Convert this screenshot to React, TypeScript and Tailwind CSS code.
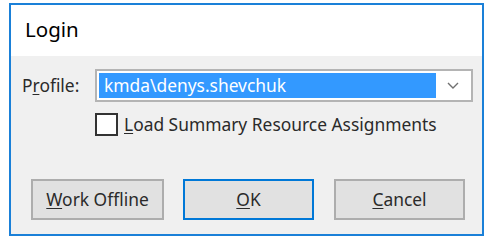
import React from "react";

export default function App() {
  const font = { fontFamily: '"Noto Sans", "Open Sans", sans-serif' };
  return (
    <div className="w-[492px] h-[241px] bg-white pt-[3px] pl-[9px]" style={font}>
      <div className="w-[475px] h-[233px] border-2 border-[#1a80d8] flex flex-col">
        <div className="h-[51px] bg-white flex items-center pl-[14px] text-[20.5px] text-black leading-none pb-[2px]">
          Login
        </div>
        <div className="flex-1 bg-[#f0f0f0] flex flex-col pt-[13px] text-[17.4px] text-[#2a2a2a]">
          <div className="flex items-center h-[33px]">
            <div className="w-[84px] pl-[11px] leading-none">
              P<span className="underline underline-offset-2">r</span>ofile:
            </div>
            <div className="w-[378px] h-[33px] border-2 border-[#b4b4b4] bg-white flex items-center p-[2px]">
              <div className="flex-1 h-full bg-[#3399ff] text-white flex items-center pl-[5px] leading-none">
                kmda\denys.shevchuk
              </div>
              <div className="w-[33px] h-full flex items-center justify-center">
                <svg width="12" height="7" viewBox="0 0 12 7">
                  <path d="M1 1 L6 6 L11 1" fill="none" stroke="#707070" strokeWidth="1.4" />
                </svg>
              </div>
            </div>
          </div>
          <div className="flex items-center mt-[11px] pl-[84px] h-[23px]">
            <div className="w-[23px] h-[23px] border-2 border-[#333333] bg-white" />
            <div className="ml-[6px] leading-none">
              <span className="underline underline-offset-2">L</span>oad Summary Resource Assignments
            </div>
          </div>
          <div className="flex mt-[43px] pl-[20px] gap-[19px]">
            <button className="w-[133px] h-[41px] border-2 border-[#adadad] bg-[#e1e1e1] text-[#2a2a2a] leading-none">
              <span className="underline underline-offset-2">W</span>ork Offline
            </button>
            <button className="w-[131px] h-[41px] border-2 border-[#0078d7] bg-[#e1e1e1] text-[#2a2a2a] leading-none">
              <span className="underline underline-offset-2">O</span>K
            </button>
            <button className="w-[131px] h-[41px] border-2 border-[#adadad] bg-[#e1e1e1] text-[#2a2a2a] leading-none ml-[1px]">
              <span className="underline underline-offset-2">C</span>ancel
            </button>
          </div>
        </div>
      </div>
    </div>
  );
}
